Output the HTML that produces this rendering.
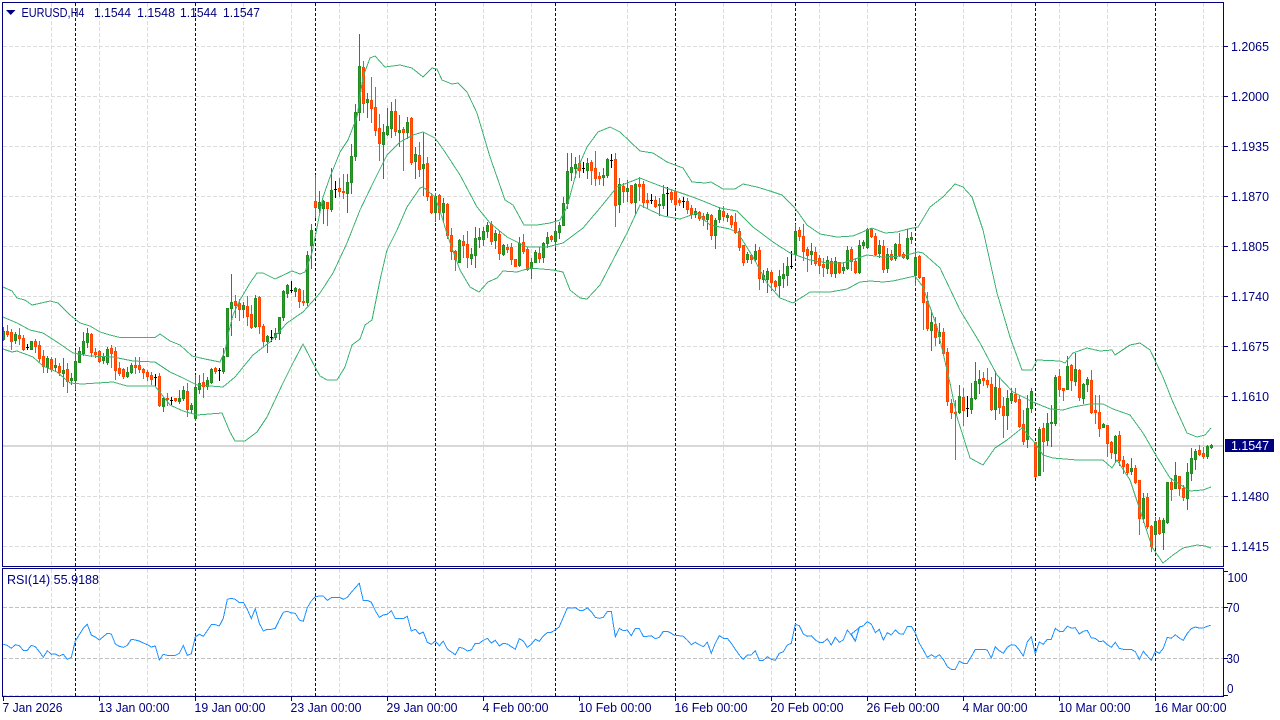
<!DOCTYPE html>
<html><head><meta charset="utf-8"><title>EURUSD,H4</title>
<style>html,body{margin:0;padding:0;background:#fff;width:1280px;height:720px;overflow:hidden}svg{display:block}text{font-family:"Liberation Sans",sans-serif;font-size:13px;fill:#000080}</style></head>
<body>
<svg id="c" xmlns="http://www.w3.org/2000/svg" width="1280" height="720" viewBox="0 0 1280 720">
<rect width="1280" height="720" fill="#fff"/>
<g fill="none" shape-rendering="crispEdges">
<path stroke="#dcdcdc" stroke-dasharray="4 2" d="M3 46.5H1223M3 96.5H1223M3 146.5H1223M3 196.5H1223M3 246.5H1223M3 296.5H1223M3 346.5H1223M3 396.5H1223M3 496.5H1223M3 546.5H1223"/>
<path stroke="#dcdcdc" stroke-dasharray="4 2" d="M51.5 3V566M99.5 3V566M147.5 3V566M243.5 3V566M291.5 3V566M339.5 3V566M387.5 3V566M483.5 3V566M531.5 3V566M627.5 3V566M723.5 3V566M771.5 3V566M819.5 3V566M867.5 3V566M963.5 3V566M1011.5 3V566M1059.5 3V566M1107.5 3V566M1203.5 3V566"/>
<path stroke="#dcdcdc" stroke-dasharray="4 2" d="M51.5 569V696M99.5 569V696M147.5 569V696M243.5 569V696M291.5 569V696M339.5 569V696M387.5 569V696M483.5 569V696M531.5 569V696M627.5 569V696M723.5 569V696M771.5 569V696M819.5 569V696M867.5 569V696M963.5 569V696M1011.5 569V696M1059.5 569V696M1107.5 569V696M1203.5 569V696"/>
<path stroke="#c0c0c0" stroke-dasharray="4 2" d="M3 607.5H1223M3 658.5H1223"/>
<path stroke="#d8d8d8" stroke-dasharray="4 2" d="M3 695.5H1223"/>
<path stroke="#d8d8d8" stroke-width="2" d="M3 446H1224"/>
<path stroke="#000080" stroke-dasharray="3 2" d="M75.5 3V696M195.5 3V696M315.5 3V696M435.5 3V696M555.5 3V696M675.5 3V696M795.5 3V696M915.5 3V696M1035.5 3V696M1155.5 3V696"/>
</g>
<g id="candles" shape-rendering="crispEdges"></g>
<g fill="none" stroke="#3CB371" stroke-width="1" shape-rendering="crispEdges">
<polyline points="3,287 12,291 17,298 25,300 32,305 37,304 50,301 58,303 70,315 80,323 90,326 100,332 110,335 120,337.5 155,337.5 160,334 170,341 180,345 192,356 205,359 220,362 225,351 228,335 233,315 240,300 250,283 257,273 263,273 275,279 292,271 300,274 305,272 312,253 323,197 330,177 340,152 348,140 357,117 363,77 370,58 375,56 385,67 400,65 412,68 423,77 432,68 437,69 442,80 452,84 458,83 467,92 477,113 490,157 497,177 505,200 513,205 524,225 537,225 550,223 560,220 567,207 577,170 587,147 598,132 610,127 620,132 640,151 653,153 667,162 683,168 692,182 705,183 711,182 723,189 735,189 743,184 757,187 770,191 782,195 795,208 807,225 820,234 837,237 853,236 872,228 885,233 897,232 908,229 918,227 930,207 943,197 955,184 963,187 972,197 983,230 997,293 1010,337 1022,370 1032,370 1037,360 1060,361 1065,363 1073,353 1087,348 1100,351 1112,350 1115,355 1130,345 1140,343 1150,350 1163,377 1172,400 1187,433 1197,437 1205,435 1211,428"/>
<polyline points="3,317 17,323 30,330 43,333 57,342 73,353 90,356 113,357 133,361 155,362 170,372 183,378 197,385 223,387 235,377 253,355 270,342 287,323 303,312 320,293 333,273 347,243 360,210 373,183 387,155 400,142 413,135 423,132 435,138 445,152 460,175 477,207 490,223 507,237 527,247 547,247 563,243 583,228 600,208 617,187 640,178 650,182 663,187 687,195 703,201 720,208 737,211 753,227 773,242 790,253 810,260 827,263 843,263 867,255 883,257 903,256 918,252 923,253 940,268 960,310 980,343 997,375 1013,392 1033,402 1050,409 1063,410 1073,407 1090,404 1103,404 1113,409 1130,415 1143,433 1157,457 1170,478 1190,491 1203,490 1211,487"/>
<polyline points="3,349 12,352 17,351 33,357 43,366 57,372 70,383 82,384 113,382 127,386 155,386 170,405 183,411 197,415 222,413 230,432 235,441 245,441 257,432 267,417 283,383 293,363 303,344 315,367 320,376 327,380 337,380 345,367 352,345 360,339 365,325 372,320 380,280 387,250 397,230 407,207 420,188 423,187 435,197 442,217 448,237 460,270 470,287 479,292 488,282 497,278 503,271 517,272 530,268 553,270 563,272 570,290 580,298 587,299 600,285 613,260 627,233 640,205 650,210 663,216 680,219 697,213 710,225 730,229 738,233 753,257 767,283 780,298 793,303 810,292 830,292 847,289 860,282 870,281 883,282 893,281 915,276 923,287 937,327 950,383 957,417 970,458 983,465 995,448 1007,440 1022,428 1035,443 1043,455 1053,458 1077,460 1103,460 1112,468 1117,460 1130,480 1140,510 1152,547 1163,563 1173,555 1183,548 1197,545 1205,546 1211,548"/>
</g>
<polyline id="rsi" fill="none" stroke="#1E90FF" stroke-width="1" shape-rendering="crispEdges" points=""/>
<g fill="none" stroke="#000080" shape-rendering="crispEdges">
<rect x="2.5" y="2.5" width="1221" height="564"/>
<rect x="2.5" y="568.5" width="1221" height="128"/>
<path d="M1224 46.5h4M1224 96.5h4M1224 146.5h4M1224 196.5h4M1224 246.5h4M1224 296.5h4M1224 346.5h4M1224 396.5h4M1224 496.5h4M1224 546.5h4M1224 571.5h4M1224 607.5h4M1224 658.5h4M1224 695.5h4"/>
<path d="M3.5 697v4M99.5 697v4M195.5 697v4M291.5 697v4M387.5 697v4M483.5 697v4M579.5 697v4M675.5 697v4M771.5 697v4M867.5 697v4M963.5 697v4M1059.5 697v4M1155.5 697v4"/>
</g>
<polygon points="6,10 15.5,10 10.7,15" fill="#000080"/>
<rect x="1225" y="439" width="49" height="13" fill="#000080"/>
<g>
<text x="21.5" y="17" textLength="63" lengthAdjust="spacingAndGlyphs">EURUSD,H4</text>
<text x="94" y="17" textLength="37" lengthAdjust="spacingAndGlyphs">1.1544</text>
<text x="137" y="17" textLength="38" lengthAdjust="spacingAndGlyphs">1.1548</text>
<text x="180" y="17" textLength="37" lengthAdjust="spacingAndGlyphs">1.1544</text>
<text x="223" y="17" textLength="37" lengthAdjust="spacingAndGlyphs">1.1547</text>
<text x="7" y="584" textLength="92" lengthAdjust="spacingAndGlyphs">RSI(14) 55.9188</text>
<text x="1231" y="51" textLength="38" lengthAdjust="spacingAndGlyphs">1.2065</text>
<text x="1231" y="101" textLength="38" lengthAdjust="spacingAndGlyphs">1.2000</text>
<text x="1231" y="151" textLength="38" lengthAdjust="spacingAndGlyphs">1.1935</text>
<text x="1231" y="201" textLength="38" lengthAdjust="spacingAndGlyphs">1.1870</text>
<text x="1231" y="251" textLength="38" lengthAdjust="spacingAndGlyphs">1.1805</text>
<text x="1231" y="301" textLength="38" lengthAdjust="spacingAndGlyphs">1.1740</text>
<text x="1231" y="351" textLength="38" lengthAdjust="spacingAndGlyphs">1.1675</text>
<text x="1231" y="401" textLength="38" lengthAdjust="spacingAndGlyphs">1.1610</text>
<text x="1231" y="450" textLength="38" lengthAdjust="spacingAndGlyphs" style="fill:#fff">1.1547</text>
<text x="1231" y="501" textLength="38" lengthAdjust="spacingAndGlyphs">1.1480</text>
<text x="1231" y="551" textLength="38" lengthAdjust="spacingAndGlyphs">1.1415</text>
<text x="1227.5" y="582" textLength="20" lengthAdjust="spacingAndGlyphs">100</text>
<text x="1226.5" y="612" textLength="13" lengthAdjust="spacingAndGlyphs">70</text>
<text x="1226.5" y="663" textLength="13" lengthAdjust="spacingAndGlyphs">30</text>
<text x="1227" y="693" textLength="6.5" lengthAdjust="spacingAndGlyphs">0</text>
<text x="2.5" y="712" textLength="60" lengthAdjust="spacingAndGlyphs">7 Jan 2026</text>
<text x="98.5" y="712" textLength="71" lengthAdjust="spacingAndGlyphs">13 Jan 00:00</text>
<text x="194.5" y="712" textLength="71" lengthAdjust="spacingAndGlyphs">19 Jan 00:00</text>
<text x="290.5" y="712" textLength="71" lengthAdjust="spacingAndGlyphs">23 Jan 00:00</text>
<text x="386.5" y="712" textLength="71" lengthAdjust="spacingAndGlyphs">29 Jan 00:00</text>
<text x="482.5" y="712" textLength="66" lengthAdjust="spacingAndGlyphs">4 Feb 00:00</text>
<text x="578.5" y="712" textLength="73" lengthAdjust="spacingAndGlyphs">10 Feb 00:00</text>
<text x="674.5" y="712" textLength="73" lengthAdjust="spacingAndGlyphs">16 Feb 00:00</text>
<text x="770.5" y="712" textLength="73" lengthAdjust="spacingAndGlyphs">20 Feb 00:00</text>
<text x="866.5" y="712" textLength="73" lengthAdjust="spacingAndGlyphs">26 Feb 00:00</text>
<text x="962.5" y="712" textLength="65" lengthAdjust="spacingAndGlyphs">4 Mar 00:00</text>
<text x="1058.5" y="712" textLength="72" lengthAdjust="spacingAndGlyphs">10 Mar 00:00</text>
<text x="1154.5" y="712" textLength="72" lengthAdjust="spacingAndGlyphs">16 Mar 00:00</text>
</g>
</svg>
<script>
var D=[[240,"3 g 262 272 297 300,7 r 255 274 283 288,11 r 266 276 302 327,15 g 275 283 299 309,19 r 264 285 293 312,23 r 285 294 326 330,27 k 313 320 320 328,31 g 303 304 326 328,35 r 296 304 318 335,39 r 304 315 353 362,43 r 330 348 377 396,47 g 348 354 380 395,51 r 352 357 387 393,55 g 355 376 381 390,59 r 370 378 396 405,63 g 355 390 399 438,67 r 370 387 424 455,71 g 398 414 420 432,75 g 330 363 419 447,79 g 320 333 365 367,83 g 275 303 338 345,87 g 263 280 306 320,91 r 280 282 336 347,95 r 323 336 342 351,99 r 330 333 362 365,103 g 340 348 360 370,107 g 322 327 367 373,111 r 316 325 339 380,115 r 322 333 390 417,119 r 365 385 400 405,123 r 385 387 409 415,127 g 380 396 408 410,131 g 368 375 396 400,135 r 352 376 381 400,139 r 350 376 387 397,143 r 384 387 396 415,147 r 390 397 408 420,151 r 395 405 417 432,155 k 403 410 410 438,159 r 400 408 495 497,163 g 472 475 497 513,167 r 460 473 477 495,171 k 472 480 480 492,175 r 474 475 481 483,179 g 451 474 484 489,183 g 438 450 474 480,187 r 430 454 507 527,191 g 488 495 507 520,195 g 405 442 533 540,199 g 405 430 447 458,203 r 398 427 438 472,207 g 410 420 438 448,211 g 385 387 426 430,215 r 380 384 394 398,219 k 384 390 390 420,223 g 325 348 392 400,227 g 205 205 347 320,231 g 102 187 205 285,235 r 165 183 195 230,239 r 178 190 207 240,243 g 185 195 207 232,247 r 168 198 228 255,251 r 195 222 260 265,255 g 165 174 258 262,259 r 168 171 257 278,263 r 252 258 304 318,267 g 285 288 303 335,271 k 270 292 292 302,275 g 265 280 292 298,279 g 230 232 280 296,283 g 150 153 232 240,287 g 133 135 158 170,291 k 123 149 149 155,295 g 140 145 152 168,299 r 145 148 182 200,303 r 150 184 186 196,307 g 33 45 186 195,311 g -48 -30 15 85,315 r -195 -117 -99 -69"],
[20,"319 g 513 545 565 575,323 g 540 543 565 610,327 r 545 545 565 615,331 g 445 510 567 572,335 k 482 508 508 530,339 r 475 503 513 528,343 r 462 513 515 533,347 g 463 487 518 575,351 g 372 408 485 520,355 g 252 277 407 420,359 g 42 138 275 300,363 r 122 141 248 275,367 g 220 237 245 290,371 r 170 240 264 305,375 r 200 261 330 345,379 r 282 324 368 420,383 g 312 336 371 473,387 g 265 318 342 345,391 g 245 273 323 350,395 r 237 273 333 345,399 g 285 330 336 378,403 r 320 327 335 450,407 g 292 306 336 355,411 r 290 294 427 432,415 g 380 402 422 473,419 r 365 405 447 468,423 g 335 432 444 525,427 r 410 430 527 540,431 r 520 527 575 578,435 g 520 528 575 602,439 r 522 525 575 598,443 g 535 549 575 600,447 r 548 552 645 655,451 r 625 645 693 717,455 r 690 693 717 750,459 g 658 660 725 725,463 r 645 663 675 710,467 r 632 672 712 740,471 g 685 702 713 733,475 g 622 654 704 740,479 g 625 651 657 680,483 g 620 633 656 675,487 g 605 615 633 650,491 r 603 612 663 672,495 g 630 640 660 683,499 r 633 642 698 717,503 g 672 675 701 705,507 r 672 681 686 695,511 r 670 681 717 733,515 r 717 717 737 737,519 g 650 668 735 738,523 r 642 666 692 700,527 r 680 687 747 750,531 g 715 726 743 775,535 g 690 696 725 727,539 r 680 699 714 725,543 g 665 670 710 725,547 g 635 652 668 682,551 r 645 648 658 662,555 g 605 633 663 682,559 g 605 615 635 655,563 g 530 549 614 615,567 g 398 453 548 565,571 g 400 442 457 480,575 g 410 432 445 470,579 r 405 430 450 470,583 k 425 445 445 455,587 g 415 429 450 475,591 r 420 426 450 492,595 r 393 445 473 495,599 r 455 468 474 493,603 g 445 464 470 495,607 g 415 417 465 470,611 k 403 421 421 442,615 r 400 417 555 617,619 g 475 492 552 575,623 r 490 497 513 545,627 g 480 503 514 543,631 r 495 496 545 550,635 g 490 492 546 578,639 r 470 493 498 540"],
[130,"643 r 153 162 215 232,647 r 190 210 216 235,651 k 192 209 209 219,655 r 198 210 228 232,659 g 205 222 224 255,663 g 165 192 224 235,667 k 172 190 190 255,671 r 178 186 207 217,675 r 178 182 221 230,679 r 205 209 215 224,683 k 202 214 214 232,687 r 205 212 237 250,691 r 225 235 252 265,695 g 235 243 252 262,699 r 243 247 265 270,703 r 250 257 268 285,707 g 247 252 267 297,711 r 252 256 315 328,715 g 265 270 314 353,719 g 230 240 268 275,723 r 228 243 258 270,727 g 250 254 260 272,731 r 255 258 282 290,735 r 250 276 307 310,739 r 295 304 350 360,743 r 345 346 396 405,747 g 365 372 387 395,751 r 372 376 386 398,755 g 342 363 387 390,759 r 350 360 443 478,763 g 420 436 446 455,767 g 415 424 446 485,771 r 420 426 457 480,775 r 450 454 467 480,779 g 420 438 465 498,783 g 400 432 443 470,787 g 380 408 435 465,791 k 363 408 408 415,795 g 282 303 372 385,799 r 290 300 318 330,803 r 282 318 362 390,807 r 350 358 375 422,811 g 340 363 372 402,815 r 350 366 400 405,819 r 375 385 405 430,823 r 385 402 411 437,827 g 378 390 413 430,831 r 385 393 430 437,835 g 380 393 430 440,839 r 395 396 427 430,843 g 395 412 420 430,847 g 348 360 415 416,851 r 350 358 393 420,855 r 385 392 426 430,859 g 330 345 425 430,863 g 330 336 345 355,867 g 293 298 350 353,871 r 293 296 317 320,875 r 310 317 372 375,879 g 330 345 368 380,883 r 330 348 418 425,887 g 355 373 415 425,891 r 360 373 388 390,895 g 340 342 385 390,899 r 310 342 375 378,903 r 365 372 380 385,907 g 298 325 383 387,911 g 305 320 327 340"],
[170,"915 g 240 262 315 345,919 r 255 258 322 325,923 r 320 320 397 478,927 r 365 394 475 480,931 g 420 457 479 540,935 r 440 462 500 525,939 g 458 485 497 520,943 r 475 485 550 555,947 r 535 547 692 705,951 r 688 700 727 745,955 r 690 725 729 867,959 g 645 677 727 730,963 r 655 682 720 765,967 k 678 715 715 738,971 g 640 685 718 730,975 g 575 634 684 688,979 g 600 628 638 670,983 r 605 625 631 645,987 r 595 630 642 650,991 r 620 642 718 720,995 g 602 652 716 748,999 r 625 655 712 730,1003 r 680 708 735 802,1007 g 660 683 736 778,1011 g 655 670 690 700,1015 r 655 672 692 695,1019 r 675 687 768 772,1023 r 720 762 812 822,1027 g 675 715 808 830,1031 g 655 664 713 725,1035 r 815 817 917 920,1039 g 770 778 915 915,1043 r 760 775 812 903,1047 g 730 760 810 825,1051 g 705 755 758 828,1055 g 615 622 760 765,1059 r 597 619 658 677,1063 r 655 655 660 690,1067 g 557 587 656 658,1071 r 582 585 630 660,1075 g 550 598 632 645,1079 r 597 600 682 690,1083 g 640 642 683 698,1087 g 620 628 641 662,1091 r 600 631 725 730,1095 r 675 721 726 758,1099 r 675 727 773 797,1103 g 760 763 770 772,1107 r 765 766 818 858,1111 r 812 817 845 863,1115 g 795 799 850 875,1119 r 783 796 870 885,1123 r 858 871 887 910,1127 r 880 882 907 912,1131 g 865 895 903 912,1135 r 885 895 935 940,1139 r 930 930 1045 1092,1143 g 968 984 1043 1055,1147 r 970 982 1067 1075,1151 r 1065 1069 1127 1143,1155 g 1040 1054 1093 1130,1159 r 1040 1051 1088 1092,1163 g 1045 1051 1085 1136,1167 g 935 937 1055 1058,1171 r 925 937 956 990,1175 g 875 916 953 955,1179 r 918 919 953 975,1183 r 945 953 981 990,1187 g 878 907 983 1017,1191 g 835 865 910 930,1195 g 838 844 866 898,1199 r 825 841 851 855,1203 r 830 848 858 865,1207 g 825 829 857 864,1211 g 822 825 832 835"]];
var h="",W={g:"#228B22",r:"#FF4500",k:"#000000"},F={g:"#22a022",r:"#FF6000"};
D.forEach(function(s){var o=s[0];s[1].split(",").forEach(function(e){var p=e.split(" "),x=+p[0],c=p[1],y=function(i){return Math.round(+p[i]/3)+o},H=y(2),T=y(3),B=y(4),L=y(5);
H=Math.min(H,T);L=Math.max(L,B);
h+='<rect x="'+x+'" y="'+H+'" width="1" height="'+(L-H+1)+'" fill="'+W[c]+'"/>';
if(c=="k"){h+='<rect x="'+(x-1)+'" y="'+T+'" width="3" height="1" fill="#000"/>'}
else{h+='<rect x="'+(x-1)+'" y="'+T+'" width="3" height="'+(Math.max(B-T,1)+1)+'" fill="'+W[c]+'"/>';
if(B-T>1)h+='<rect x="'+x+'" y="'+(T+1)+'" width="1" height="'+(B-T-1)+'" fill="'+F[c]+'"/>'}
})});
document.getElementById("candles").innerHTML=h;
var R=[[0,"10,253 22,256 34,265 46,254 58,257 70,271 82,271 94,256 106,260 118,275 130,292 142,272 154,283 166,282 178,288 190,283 202,298 214,292 226,243 238,224 250,205 262,193 274,225 286,231 298,240 310,230 322,220 334,222 346,252 358,259 370,262 382,256 394,238 406,240 418,243 430,249 442,254 454,261 466,258 478,300 490,283 502,286 514,286 526,286 538,280 550,256 562,286 574,281 586,231 598,223 610,229 622,212 634,194 646,194 658,198 670,175 682,118 694,115 706,118 718,128 730,127 742,148 754,176 766,146 778,190 790,213 802,208 814,208 826,205 838,180 850,157 862,154 874,159 886,160 898,180 910,184 922,143 934,123 946,110 958,108 970,108 982,121 994,113 1006,112 1018,112 1030,118 1042,112 1054,97 1066,83 1078,70 1090,122 1102,121 1114,127 1126,152 1138,172 1150,165 1162,163 1174,152 1186,176 1198,176 1210,176 1222,169 1234,213 1246,208 1258,222 1270,216 1282,247"],
[430,"4,253 16,243 28,257 40,243 52,267 64,276 76,284 88,262 100,265 112,273 124,270 136,250 148,250 160,241 172,235 184,249 196,241 208,258 220,250 232,252 244,260 256,268 268,236 280,243 292,262 304,253 316,238 328,244 340,228 352,218 364,217 376,210 388,200 400,172 412,144 424,144 436,143 448,151 460,151 472,144 484,155 496,172 508,175 520,172 532,155 544,154 556,230 568,205 580,212 592,210 604,227 616,205 628,206 640,229 652,229 664,227 676,236 688,232 700,214 712,214 724,220 736,227 748,227 760,229 772,240 784,254 796,247 808,254 820,260 832,247 844,280 856,250 868,227 880,235 892,235 904,250 916,268 928,285 940,298 952,285 964,285 976,272 988,301 1000,301 1012,290 1024,298 1036,301 1048,280 1060,275 1072,255 1084,250 1096,193 1108,197 1120,222 1132,229 1144,227 1156,240 1168,247 1180,247 1192,236 1204,255 1216,232 1228,247 1240,240 1252,210 1264,225 1276,244 1288,203"],
[850,"4,222 16,243 28,201 40,198 52,185 64,192 76,218 88,208 100,240 112,218 124,225 136,210 148,221 160,223 172,199 184,199 196,218 208,250 220,270 232,292 244,284 256,292 268,284 280,298 292,320 304,328 316,328 328,304 340,310 352,310 364,290 376,268 388,268 400,268 412,270 424,294 436,260 448,272 460,280 472,262 484,254 496,256 508,270 520,288 532,246 544,230 556,282 568,246 580,253 592,238 604,238 616,205 628,214 640,214 652,199 664,204 676,203 688,222 700,214 712,211 724,234 736,235 748,245 760,243 772,254 784,262 796,247 808,265 820,268 832,269 844,268 856,275 868,298 880,274 892,288 904,301 916,274 928,280 940,265 952,232 964,235 976,224 988,234 1000,241 1012,220 1024,206 1036,201 1048,204 1060,204 1072,199 1082,196"]];
var P=[];R.forEach(function(s){s[1].split(" ").forEach(function(q){var a=q.split(",");P.push((s[0]+a[0]/3).toFixed(1)+","+(560+a[1]/3).toFixed(1))})});
document.getElementById("rsi").setAttribute("points",P.join(" "));
</script>
</body></html>
